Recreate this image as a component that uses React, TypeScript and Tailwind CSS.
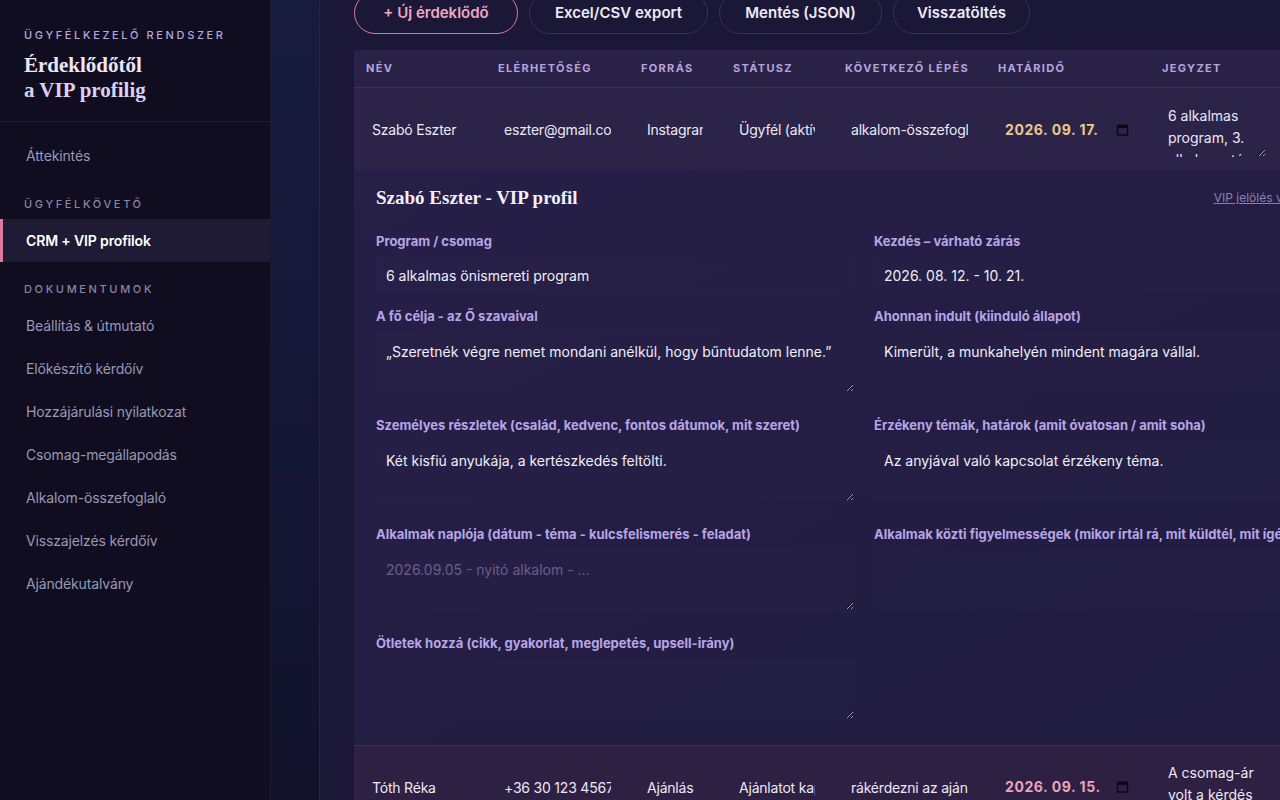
import React from 'react';

const sans = "font-['Inter','Noto_Sans',sans-serif]";
const serif = "font-['Liberation_Serif','DejaVu_Serif',serif]";

const navDocs = [
  'Beállítás & útmutató',
  'Előkészítő kérdőív',
  'Hozzájárulási nyilatkozat',
  'Csomag-megállapodás',
  'Alkalom-összefoglaló',
  'Visszajelzés kérdőív',
  'Ajándékutalvány',
];

const columns = [
  { label: 'Név', w: 'w-[132px]' },
  { label: 'Elérhetőség', w: 'w-[143px]' },
  { label: 'Forrás', w: 'w-[92px]' },
  { label: 'Státusz', w: 'w-[112px]' },
  { label: 'Következő lépés', w: 'w-[153px]' },
  { label: 'Határidő', w: 'w-[164px]' },
  { label: 'Jegyzet', w: 'w-[224px]' },
];

const CalendarIcon = () => (
  <svg width="13" height="13" viewBox="0 0 13 13" className="shrink-0">
    <rect x="1.5" y="2.5" width="10" height="9.5" fill="none" stroke="#0b0a12" strokeWidth="1.4" />
    <rect x="1.5" y="2.5" width="10" height="2.5" fill="#0b0a12" />
    <rect x="3.5" y="1" width="1.4" height="2" fill="#0b0a12" />
    <rect x="8.1" y="1" width="1.4" height="2" fill="#0b0a12" />
  </svg>
);

interface RowProps {
  name: string;
  contact: string;
  source: string;
  status: string;
  next: string;
  date: string;
  dateColor: string;
  note: string;
  className?: string;
}

const cellInput = 'w-full bg-transparent px-1.5 text-[14px] tracking-[-0.015em] text-[#ece8f6] outline-none';

const LeadRow: React.FC<RowProps> = ({ name, contact, source, status, next, date, dateColor, note, className = '' }) => (
  <div className={`flex items-center h-[82px] ${className}`}>
    <div className="w-[132px] px-3"><input readOnly value={name} className={cellInput} /></div>
    <div className="w-[143px] px-3"><input readOnly value={contact} className={cellInput} /></div>
    <div className="w-[92px] px-3"><input readOnly value={source} className={cellInput} /></div>
    <div className="w-[112px] px-3"><input readOnly value={status} className={cellInput} /></div>
    <div className="w-[153px] px-3"><input readOnly value={next} className={cellInput} /></div>
    <div className="w-[164px] px-3">
      <div className="flex items-center justify-between pl-[7px] pr-[9px]">
        <span className={`text-[14px] font-bold tracking-[0.04em] ${dateColor}`}>{date}</span>
        <CalendarIcon />
      </div>
    </div>
    <div className="w-[224px] px-3">
      <textarea
        readOnly
        value={note}
        className="block w-[104px] h-[55px] bg-transparent px-1.5 pt-[3px] text-[14px] leading-[22px] text-[#ece8f6] outline-none overflow-hidden"
      />
    </div>
  </div>
);

const Label: React.FC<{ children: React.ReactNode }> = ({ children }) => (
  <div className="h-[18px] leading-[18px] text-[13px] font-bold text-[#b8a5e6] whitespace-nowrap mb-[7px]">
    {children}
  </div>
);

const Field: React.FC<{ label: string; value?: string; placeholder?: string; area?: boolean }> = ({
  label,
  value = '',
  placeholder,
  area,
}) => (
  <div className="min-w-0">
    <Label>{label}</Label>
    {area ? (
      <textarea
        readOnly
        value={value}
        placeholder={placeholder}
        className="block w-full h-[60px] mb-[10px] bg-white/[0.004] px-[10px] pt-[10px] text-[14px] leading-[20px] text-[#f1eef8] placeholder:text-[#675f8a] outline-none"
      />
    ) : (
      <input
        readOnly
        value={value}
        className="block w-full h-[36px] bg-white/[0.004] px-[10px] text-[14px] text-[#f1eef8] outline-none"
      />
    )}
  </div>
);

export default function App() {
  return (
    <div className={`flex h-[800px] w-[1280px] overflow-hidden bg-[#13122b] ${sans}`}>
      {/* sidebar */}
      <aside className="w-[271px] shrink-0 bg-[#0f0d1f] border-r border-[#1d1a30] flex flex-col">
        <div className="px-6 pt-[29px] pb-[18px] border-b border-[#1f1c32]">
          <div className="text-[11px] font-medium tracking-[0.24em] text-[#b7a9dc] leading-[13px]">ÜGYFÉLKEZELŐ RENDSZER</div>
          <div className={`${serif} mt-[11px] text-[21px] font-bold leading-[25px] text-[#ece6f7]`}>
            Érdeklődőtől
            <br />
            <span className="text-[#dcd0f0]">a VIP profilig</span>
          </div>
        </div>
        <nav className="pt-[12px] text-[14px] tracking-[-0.01em]">
          <div className="h-[43px] flex items-center pl-[26px] text-[#9c97b4]">Áttekintés</div>
          <div className="mt-[20px] mb-[8px] pl-6 text-[11px] font-medium tracking-[0.24em] text-[#8b85a5] leading-[14px]">ÜGYFÉLKÖVETŐ</div>
          <div className="h-[43px] flex items-center pl-[23px] border-l-[3px] border-[#e2789e] bg-[#1f1b35] text-white font-semibold">
            CRM + VIP profilok
          </div>
          <div className="mt-[20px] mb-[8px] pl-6 text-[11px] font-medium tracking-[0.24em] text-[#8b85a5] leading-[14px]">DOKUMENTUMOK</div>
          {navDocs.map((d) => (
            <div key={d} className="h-[43px] flex items-center pl-[26px] text-[#9c97b4]">
              {d}
            </div>
          ))}
        </nav>
      </aside>

      {/* main */}
      <main className="flex-1 min-w-0 bg-gradient-to-b from-[#171b3e] via-[#151737] to-[#12122b] pl-[48px]">
        <div className="h-full bg-[#1b1736] border-l border-[#272249] pl-[34px] overflow-hidden">
          <div className="-mt-[8px] flex gap-[11px] text-[15px] font-semibold">
            <button className="h-[42px] w-[164px] rounded-full border border-[#d9789f] text-[#f2a6c3]">+ Új érdeklődő</button>
            <button className="h-[42px] w-[179px] rounded-full border border-[#37315a] text-[#efeaf9]">Excel/CSV export</button>
            <button className="h-[42px] w-[163px] rounded-full border border-[#37315a] text-[#efeaf9]">Mentés (JSON)</button>
            <button className="h-[42px] w-[137px] rounded-full border border-[#37315a] text-[#efeaf9]">Visszatöltés</button>
          </div>

          <div className="mt-[16px] w-[1020px]">
            {/* header */}
            <div className="flex items-center h-[38px] bg-[#2a2246] border-b border-[#3a3161]">
              {columns.map((c) => (
                <div key={c.label} className={`${c.w} px-3 text-[11px] font-bold uppercase tracking-[0.12em] text-[#b5a3de]`}>
                  {c.label}
                </div>
              ))}
            </div>

            <LeadRow
              name="Szabó Eszter"
              contact="eszter@gmail.com"
              source="Instagram"
              status="Ügyfél (aktív)"
              next="alkalom-összefoglaló"
              date="2026. 09. 17."
              dateColor="text-[#e9c98d]"
              note="6 alkalmas program, 3. alkalom után"
              className="bg-[#2b2348]"
            />

            {/* VIP profile */}
            <div className="bg-gradient-to-br from-[#261f47] to-[#211c40] px-[22px] pt-[15px] pb-[16px]">
              <div className="flex items-center justify-between h-[26px]">
                <h2 className={`${serif} text-[19px] font-bold text-[#f3effa]`}>Szabó Eszter - VIP profil</h2>
                <span className="text-[12px] text-[#8c80b3] underline">VIP jelölés visszavonása</span>
              </div>
              <div className="mt-[21px] grid grid-cols-2 gap-x-[20px] gap-y-[14px]">
                <Field label="Program / csomag" value="6 alkalmas önismereti program" />
                <Field label="Kezdés – várható zárás" value="2026. 08. 12. - 10. 21." />
                <Field area label="A fő célja - az Ő szavaival" value="„Szeretnék végre nemet mondani anélkül, hogy bűntudatom lenne.”" />
                <Field area label="Ahonnan indult (kiinduló állapot)" value="Kimerült, a munkahelyén mindent magára vállal." />
                <Field area label="Személyes részletek (család, kedvenc, fontos dátumok, mit szeret)" value="Két kisfiú anyukája, a kertészkedés feltölti." />
                <Field area label="Érzékeny témák, határok (amit óvatosan / amit soha)" value="Az anyjával való kapcsolat érzékeny téma." />
                <Field area label="Alkalmak naplója (dátum - téma - kulcsfelismerés - feladat)" placeholder="2026.09.05 - nyitó alkalom - ..." />
                <Field area label="Alkalmak közti figyelmességek (mikor írtál rá, mit küldtél, mit ígértél)" />
                <Field area label="Ötletek hozzá (cikk, gyakorlat, meglepetés, upsell-irány)" />
              </div>
            </div>

            <LeadRow
              name="Tóth Réka"
              contact="+36 30 123 4567"
              source="Ajánlás"
              status="Ajánlatot kapott"
              next="rákérdezni az ajánlatra"
              date="2026. 09. 15."
              dateColor="text-[#eaa3bd]"
              note="A csomag-ár volt a kérdés"
              className="bg-[#2e2042] border-t border-[#3a2f5f]"
            />
          </div>
        </div>
      </main>
    </div>
  );
}
